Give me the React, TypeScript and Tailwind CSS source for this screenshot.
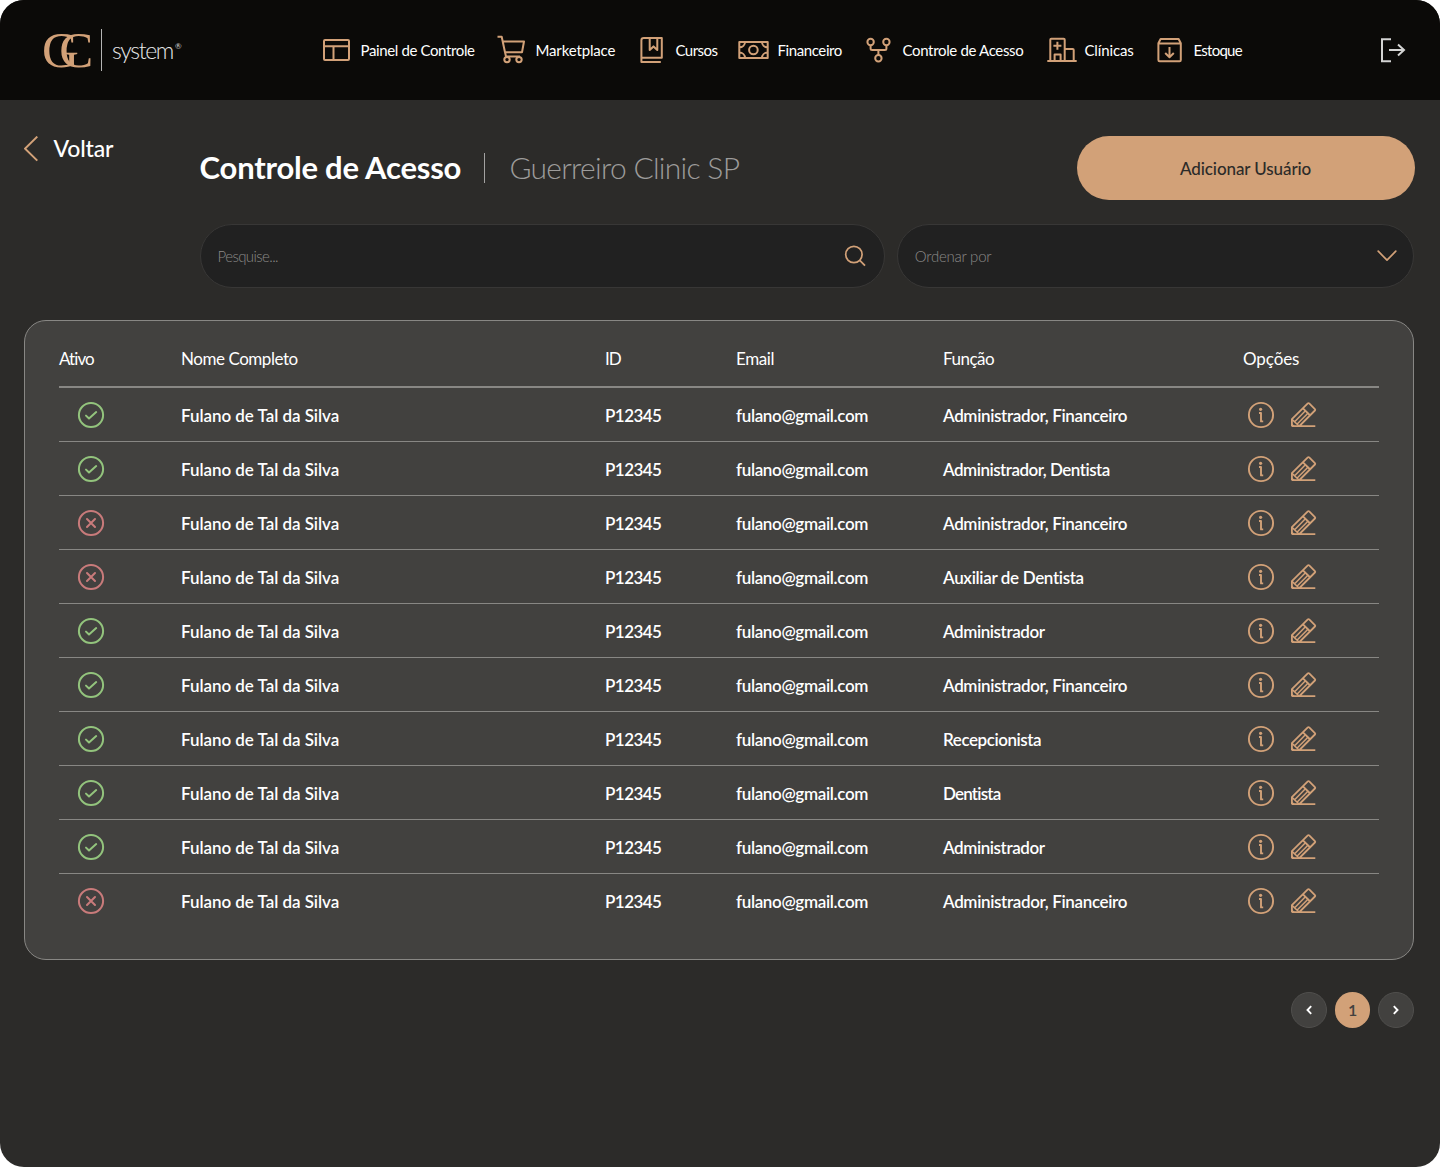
import React from 'react';

const GOLD = '#d2a178';

type IconProps = { className: string; viewBox: string; width?: number; color?: string; children: React.ReactNode };

function Icon({ className, viewBox, width = 2, color = GOLD, children }: IconProps) {
  return (
    <svg className={'shrink-0 ' + className} viewBox={viewBox} fill="none" stroke={color} strokeWidth={width} strokeLinejoin="round">
      {children}
    </svg>
  );
}

const navItems = [
  {
    label: 'Painel de Controle',
    item: 'w-[174px]',
    text: 'tracking-[-0.37px]',
    icon: (
      <Icon className="h-[30px] w-[37px]" viewBox="0 0 37 30">
        <rect x="1" y="5" width="25" height="20" rx="1" />
        <path d="M1 11.2h25M10.5 11.2V25" />
      </Icon>
    ),
  },
  {
    label: 'Marketplace',
    item: 'w-[143px]',
    text: 'tracking-[-0.15px]',
    icon: (
      <Icon className="h-[30px] w-[38px]" viewBox="0 0 38 30">
        <path d="M.5 1.8h4.2l3.3 15.5h17l2-10.8H5.8M8 17.3l1 4.2h14" />
        <circle cx="10" cy="24.6" r="2.7" />
        <circle cx="22" cy="24.6" r="2.7" />
      </Icon>
    ),
  },
  {
    label: 'Cursos',
    item: 'w-[98px]',
    text: 'tracking-[-0.55px]',
    icon: (
      <Icon className="h-[30px] w-[35px]" viewBox="0 0 35 30">
        <path d="M20.8 27H1.4V5.2Q1.4 3 3.8 3h18v19.8H1.4" />
        <path d="M9.7 3v12l3.8-3.6 3.8 3.6V3" />
      </Icon>
    ),
  },
  {
    label: 'Financeiro',
    item: 'w-[128px]',
    text: 'tracking-[-0.4px]',
    icon: (
      <Icon className="h-[30px] w-[39px]" viewBox="0 0 39 30">
        <path d="M1.3 7h28.4v16H1.3zM7 7c0 3-2.4 5.4-5.7 5.4M24 7c0 3 2.4 5.4 5.7 5.4M7 23c0-3-2.4-5.4-5.7-5.4M24 23c0-3 2.4-5.4 5.7-5.4" />
        <circle cx="15.4" cy="15" r="4.3" />
      </Icon>
    ),
  },
  {
    label: 'Controle de Acesso',
    item: 'w-[181px]',
    text: 'tracking-[-0.34px]',
    icon: (
      <Icon className="h-[30px] w-[36px]" viewBox="0 0 36 30">
        <circle cx="4.6" cy="7" r="3.2" />
        <circle cx="20.4" cy="7" r="3.2" />
        <circle cx="12.4" cy="23.3" r="3.2" />
        <path d="M4.6 10.2v3.3q0 1.5 1.5 1.5h12.8q1.5 0 1.5-1.5v-3.3M12.4 15v5" />
      </Icon>
    ),
  },
  {
    label: 'Clínicas',
    item: 'w-[110px]',
    text: 'tracking-[-0.15px]',
    icon: (
      <Icon className="h-[30px] w-[37px]" viewBox="0 0 37 30">
        <path d="M.3 26h29.4M3.3 26V4.8q0-1 1-1h12.4q1 0 1 1V26M17.7 14h8q1 0 1 1v11M7.6 26v-6.6h6V26M10.4 6.8v8M6.4 10.8h8" />
      </Icon>
    ),
  },
  {
    label: 'Estoque',
    item: 'w-[100px]',
    text: 'tracking-[-0.75px]',
    icon: (
      <Icon className="h-[30px] w-[36px]" viewBox="0 0 36 30">
        <path d="M1.4 8.2V25q0 1.2 1.2 1.2h20q1.2 0 1.2-1.2V8.2L21.6 4H3.6zM1.4 8.4h22.4M12.5 12v10.2M8.2 18l4.3 4.2 4.3-4.2" />
      </Icon>
    ),
  },
];

const ADMIN_FIN = { label: 'Administrador, Financeiro', tracking: 'tracking-[-0.35px]' };
const ADMIN_DENT = { label: 'Administrador, Dentista', tracking: 'tracking-[-0.5px]' };
const AUX = { label: 'Auxiliar de Dentista', tracking: 'tracking-[-0.34px]' };
const ADMIN = { label: 'Administrador', tracking: 'tracking-[-0.42px]' };
const RECEP = { label: 'Recepcionista', tracking: 'tracking-[-0.44px]' };
const DENT = { label: 'Dentista', tracking: 'tracking-[-0.8px]' };

const rows = [
  { active: true, role: ADMIN_FIN },
  { active: true, role: ADMIN_DENT },
  { active: false, role: ADMIN_FIN },
  { active: false, role: AUX },
  { active: true, role: ADMIN },
  { active: true, role: ADMIN_FIN },
  { active: true, role: RECEP },
  { active: true, role: DENT },
  { active: true, role: ADMIN },
  { active: false, role: ADMIN_FIN },
];

const COLS = 'grid grid-cols-[122px_424px_131px_207px_300px_1fr] items-center';

function Status({ active }: { active: boolean }) {
  return (
    <Icon className="ml-[18px] size-7" viewBox="0 0 28 28" width={2} color={active ? '#93c47d' : '#c97b7b'}>
      <circle cx="14" cy="14" r="12.1" />
      <path strokeLinecap="round" d={active ? 'm9 14.6 3 2.9 7.2-6.4' : 'm10 10 8 8m0-8-8 8'} />
    </Icon>
  );
}

function InfoIcon() {
  return (
    <Icon className="size-7" viewBox="0 0 28 28" width={1.9}>
      <circle cx="14" cy="14" r="12.1" />
      <circle cx="13.6" cy="8.3" r="1.6" fill={GOLD} stroke="none" />
      <path d="M12 12h2v8.4h2.2" />
    </Icon>
  );
}

function PencilIcon() {
  return (
    <Icon className="size-7" viewBox="0 0 28 28" width={1.8}>
      <path d="M1.9 25.2v-7L17.8 2.4q.7-.7 1.4 0l5.7 5.7q.7.7 0 1.4L9.4 25M1.9 25.2h23.4M13 7.3l7.2 7.2" />
      <path strokeWidth={1.5} d="M2 18.4l7 6.6M15.4 9.8 4.9 20.6M17.9 12.3 7.2 23" />
      <path stroke="none" d="M1.5 22 5 25.2H1.5z" fill={GOLD} />
    </Icon>
  );
}

export default function App() {
  return (
    <div className="bg-white">
      <div className="flex h-[1167px] w-[1440px] flex-col overflow-hidden rounded-[24px] bg-[#2c2b29] font-['Lato',sans-serif] text-white">
        <header className="flex h-[100px] shrink-0 items-center bg-[#0b0a08]">
          <div className="flex w-[323px] items-center pl-[42px]">
            <span className="w-[59px] pb-px font-['Liberation_Serif',serif] text-[51px] leading-[50px] tracking-[-19.5px] whitespace-nowrap text-[#d2a178]">GC</span>
            <span className="h-[42px] w-px bg-[#b5b5b4]" />
            <span className="ml-[10px] flex items-start">
              <span className="text-[23px] leading-7 font-light tracking-[-1.35px] text-[#e8e8e8]">system</span>
              <span className="mt-[6px] ml-[2px] text-[8px] leading-[9px] text-[#d0d0d0]">®</span>
            </span>
          </div>
          <nav className="flex items-center">
            {navItems.map((n) => (
              <a key={n.label} className={'flex items-center ' + n.item}>
                {n.icon}
                <span className={'pl-[0.5px] text-[15px] leading-5 whitespace-nowrap ' + n.text}>{n.label}</span>
              </a>
            ))}
          </nav>
          <Icon className="ml-[123px] h-[26px] w-[26px]" viewBox="0 0 26 26" width={2} color="#d4d4d3">
            <path strokeLinejoin="miter" d="M11 2.2H2v22h9M9 13h15M18 7.5l6 5.5-6 5.5" />
          </Icon>
        </header>

        <main className="flex flex-1 flex-col pt-9 pr-[26px] pl-6">
          <div className="flex h-[152px]">
            <a className="flex h-[26px] w-[175.6px] items-center">
              <Icon className="h-[26px] w-[29.5px]" viewBox="0 0 29.5 26" width={2}>
                <path strokeLinejoin="miter" d="M13.3.6 1.1 12.6l12.2 12" />
              </Icon>
              <span className="pb-[2px] text-[23px] leading-7 font-medium tracking-[-0.15px]">Voltar</span>
            </a>
            <div className="flex flex-1 flex-col gap-6">
              <div className="flex h-16 items-center">
                <h1 className="w-[284.4px] pb-[2px] text-[31px] leading-10 font-bold tracking-[-0.22px] whitespace-nowrap">Controle de Acesso</h1>
                <span className="-mt-px h-[30px] w-[1.5px] bg-[#a3a2a1]" />
                <span className="ml-6 pb-[2px] text-[30px] leading-10 font-light tracking-[-0.73px] whitespace-nowrap text-[#9d9c9b]">Guerreiro Clinic SP</span>
                <button className="-mr-[0.6px] ml-auto h-16 w-[338px] rounded-[32px] bg-[#d2a178] pt-px text-[17px] font-medium tracking-[-0.1px] text-[#2c2b29]">Adicionar Usuário</button>
              </div>
              <div className="-mr-[0.4px] flex h-16 gap-[11.6px]">
                <div className="flex w-[685.6px] items-center justify-between rounded-[32px] border border-[#383736] bg-[#212121] pr-[18px] pl-[17px]">
                  <span className="text-[15px] font-light tracking-[-0.6px] text-[#8b8a88]">Pesquise...</span>
                  <Icon className="size-[22px]" viewBox="0 0 22 22" width={1.7}>
                    <circle cx="9.9" cy="9.5" r="8.2" />
                    <path d="m15.8 15.3 5.2 5.4" />
                  </Icon>
                </div>
                <div className="flex flex-1 items-center justify-between rounded-[32px] border border-[#383736] bg-[#212121] pr-[16px] pl-[17px]">
                  <span className="text-[15px] font-light tracking-[-0.24px] text-[#8b8a88]">Ordenar por</span>
                  <Icon className="h-3 w-5" viewBox="0 0 20 12" width={1.7}>
                    <path strokeLinecap="round" d="m1.2 1.2 8.8 9 8.8-9" />
                  </Icon>
                </div>
              </div>
            </div>
          </div>

          <section className="mt-8 h-[640px] shrink-0 rounded-[22px] border border-[#888784] bg-[#42413f] px-[34px]">
            <div className={'h-[67px] border-b-2 border-[#888784] pt-[10px] text-[17px] ' + COLS}>
              <span className="tracking-[-0.9px]">Ativo</span>
              <span className="tracking-[-0.45px]">Nome Completo</span>
              <span className="tracking-[-0.9px]">ID</span>
              <span className="tracking-[-0.4px]">Email</span>
              <span className="tracking-[-0.5px]">Função</span>
              <span className="tracking-[-0.1px]">Opções</span>
            </div>
            {rows.map((r, i) => (
              <div key={i} className={'h-[54px] border-b border-[#888784] text-[17px] font-semibold last:border-transparent ' + COLS}>
                <Status active={r.active} />
                <span className="pt-[2px] tracking-[-0.05px]">Fulano de Tal da Silva</span>
                <span className="pt-[2px] tracking-[-0.55px]">P12345</span>
                <span className="pt-[2px] tracking-[-0.34px]">fulano@gmail.com</span>
                <span className={'pt-[2px] ' + r.role.tracking}>{r.role.label}</span>
                <span className="flex gap-[15px] pl-[4px]">
                  <InfoIcon />
                  <PencilIcon />
                </span>
              </div>
            ))}
          </section>

          <div className="mt-8 flex justify-end gap-2">
            <button className="flex size-[35.6px] items-center justify-center rounded-full border border-[#504f4d] bg-[#42413f]">
              <Icon className="h-[10px] w-[6px]" viewBox="0 0 6 10" width={1.9} color="#ffffff">
                <path strokeLinejoin="miter" d="M5.2 1.2 1.5 5l3.7 3.8" />
              </Icon>
            </button>
            <button className="flex size-[35.6px] items-center justify-center rounded-full bg-[#d2a178] text-[16px] font-semibold text-[#42413f]">1</button>
            <button className="flex size-[35.6px] items-center justify-center rounded-full border border-[#504f4d] bg-[#42413f]">
              <Icon className="h-[10px] w-[6px]" viewBox="0 0 6 10" width={1.9} color="#ffffff">
                <path strokeLinejoin="miter" d="M.8 1.2 4.5 5 .8 8.8" />
              </Icon>
            </button>
          </div>
        </main>
      </div>
    </div>
  );
}
